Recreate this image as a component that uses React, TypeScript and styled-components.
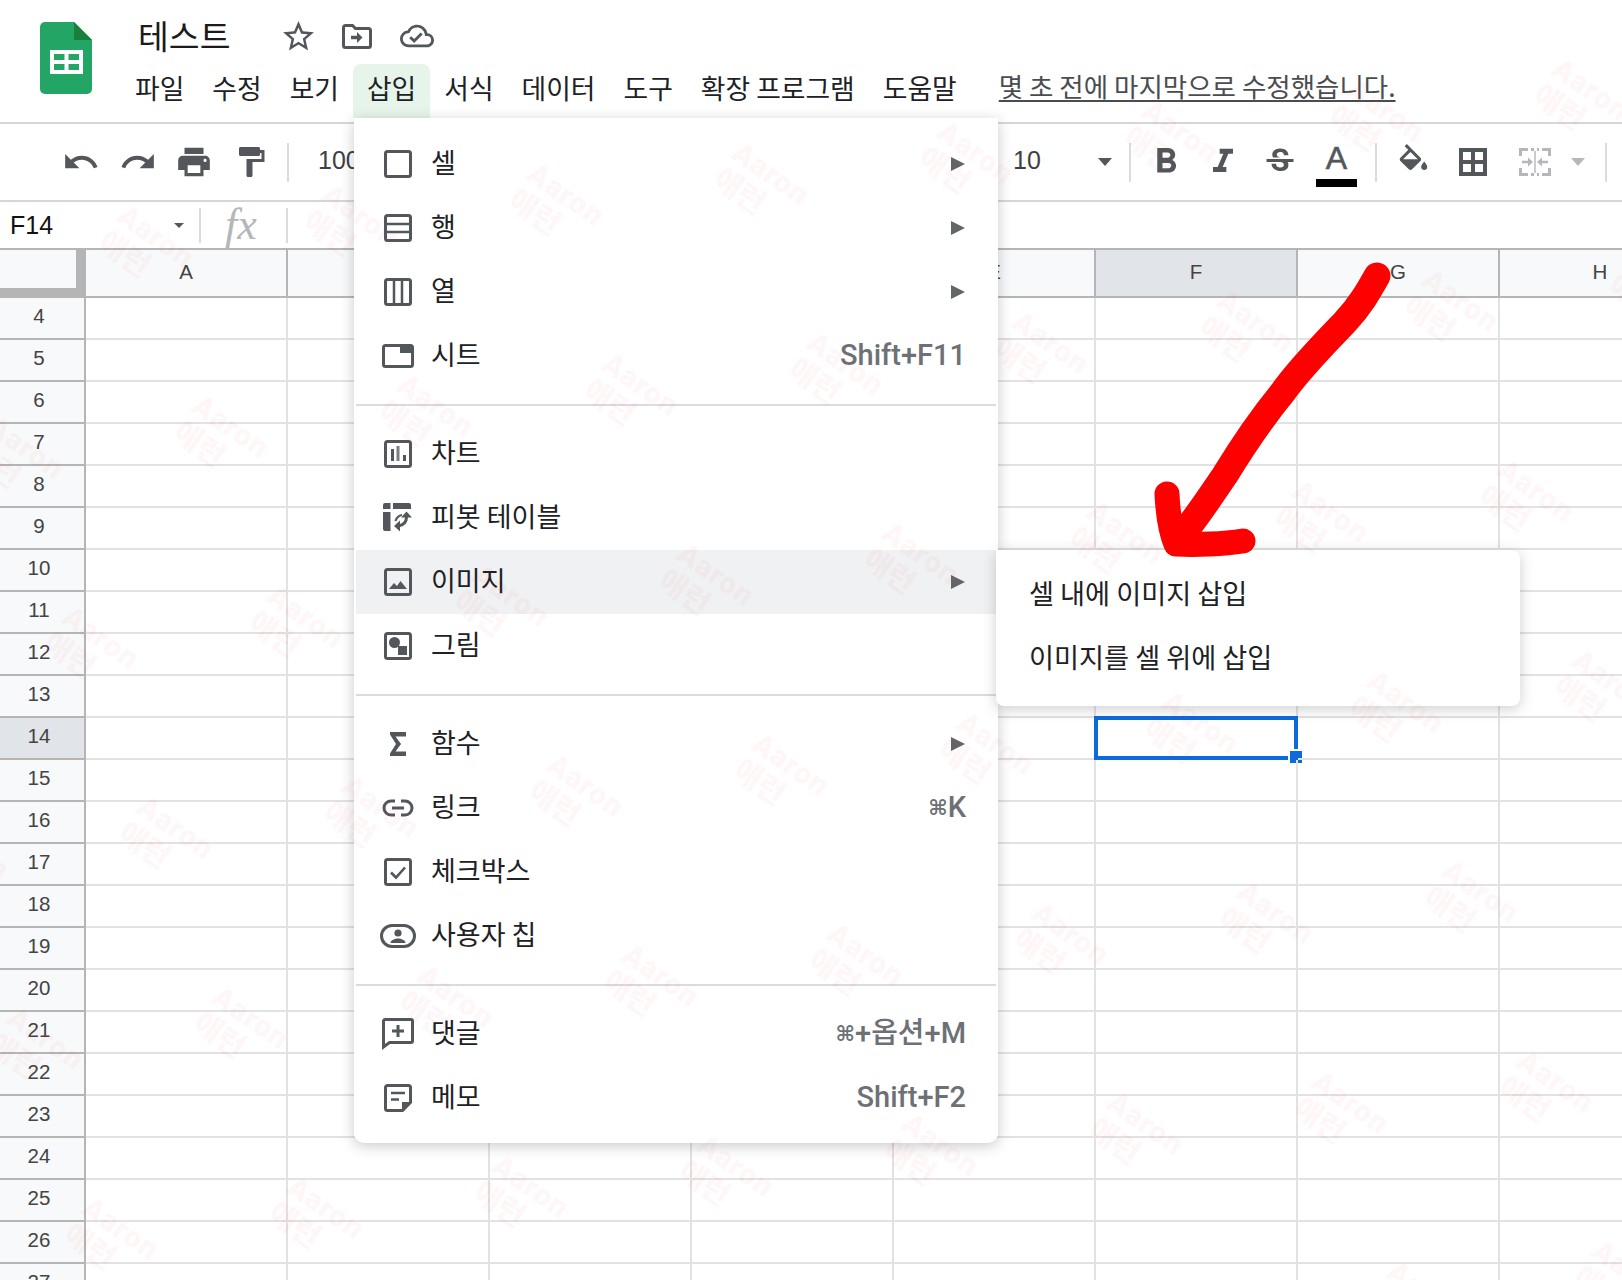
import React from 'react';
import styled, { createGlobalStyle } from 'styled-components';
import {
  MdUndo, MdRedo, MdPrint, MdFormatPaint, MdFormatBold, MdFormatItalic, MdStrikethroughS,
  MdStarBorder, MdOutlineCloudDone,
} from 'react-icons/md';

const KO = '"Noto Sans CJK KR", "Noto Sans", sans-serif';
const UI = '"Liberation Sans", Arial, sans-serif';
const ICON = '#53575c';

const Global = createGlobalStyle`
  html, body { margin: 0; padding: 0; background: #fff; }
  body { font-family: ${KO}; }
  * { box-sizing: border-box; }
`;

const Page = styled.div`
  position: relative; width: 1622px; height: 1280px; overflow: hidden; background: #fff;
  display: flex; flex-direction: column;
`;

/* ---------- header ---------- */
const Header = styled.header`
  display: flex; height: 124px; padding-left: 40px; border-bottom: 2px solid #d6d6da; flex: none;
`;
const LogoSvg = styled.svg`width: 52px; height: 72px; margin-top: 22px; flex: none;`;
const HeaderBody = styled.div`margin-left: 29px; display: flex; flex-direction: column;`;
const TitleRow = styled.div`display: flex; align-items: center; height: 40px; margin-top: 16px; padding-left: 17px;`;
const Title = styled.div`font-size: 33.5px; color: #1b1b1b; width: 138px; line-height: 38px; height: 40px; white-space: nowrap;`;
const TitleIcon = styled.span<{ $w: number }>`
  display: inline-flex; width: ${p => p.$w}px; align-items: center; justify-content: center; color: ${ICON};
`;
const MenuBar = styled.nav`display: flex; height: 54px; margin-top: 8px; align-items: stretch;`;
const MenuTab = styled.div<{ $active?: boolean }>`
  padding: 0 14px; font-size: 26.8px; line-height: 48px; color: #202124; white-space: nowrap;
  border-radius: 8px 8px 0 0; background: ${p => (p.$active ? '#e6f4ea' : 'transparent')};
`;
const LastEdit = styled.a`
  margin-left: 28px; font-size: 26.5px; line-height: 44px; color: #4a4d50; text-decoration: underline;
  text-underline-offset: 3px; white-space: nowrap;
`;

/* ---------- toolbar ---------- */
const Toolbar = styled.div`
  display: flex; align-items: center; height: 78px; padding-left: 53px; flex: none;
  border-bottom: 2px solid #d6d6da; color: ${ICON};
`;
const ToolBtn = styled.span<{ $w: number; $muted?: boolean; $col?: boolean }>`
  display: inline-flex; width: ${p => p.$w}px; flex: none; align-items: center; justify-content: center;
  flex-direction: ${p => (p.$col ? 'column' : 'row')};
  color: ${p => (p.$muted ? '#b5b7ba' : ICON)};
`;
const ToolSep = styled.span<{ $l: number; $r?: number }>`
  width: 2px; height: 39px; background: #dadbdd; flex: none;
  margin-left: ${p => p.$l}px; margin-right: ${p => p.$r ?? 0}px;
`;
const ToolText = styled.span<{ $w: number; $l?: number }>`
  width: ${p => p.$w}px; margin-left: ${p => p.$l ?? 0}px; flex: none; padding-bottom: 4px;
  font: 25px/1 ${UI}; color: #3c4043;
`;
const Caret = styled.span<{ $muted?: boolean; $l?: number; $size?: number }>`
  flex: none; width: 0; height: 0; margin-left: ${p => p.$l ?? 0}px;
  border-left: ${p => p.$size ?? 7.5}px solid transparent; border-right: ${p => p.$size ?? 7.5}px solid transparent;
  border-top: ${p => p.$size ?? 8}px solid ${p => (p.$muted ? '#b5b7ba' : ICON)};
`;
const ColorLetter = styled.span`font: 32px/20px ${UI}; color: ${ICON}; height: 30px; margin-top: 11px; -webkit-text-stroke: .6px ${ICON};`;
const ColorBar = styled.span`display: block; width: 41px; height: 8px; background: #000; margin-top: 1px;`;
const FillSvg = styled.svg`margin-top: -10px;`;
const MergeSvg = styled.svg`margin-left: 3px;`;

/* ---------- formula bar ---------- */
const FormulaBar = styled.div`
  display: flex; align-items: center; height: 48px; flex: none; border-bottom: 2px solid #b5b5b5;
`;
const NameBox = styled.div`display: flex; align-items: center; width: 199px; padding-left: 10px; flex: none;`;
const CellName = styled.span`font: 25px/1 ${UI}; color: #111; width: 164px;`;
const FormulaSep = styled.span`width: 2px; height: 35px; background: #dadbdd; flex: none;`;
const FxBox = styled.span`
  width: 85px; flex: none; text-align: center; font: italic 44px/40px "Liberation Serif", serif; color: #b4b6b8;
  padding-right: 5px;
`;

/* ---------- grid ---------- */
const Grid = styled.div`display: flex; flex-direction: column; flex: 1; overflow: hidden;`;
const HeadRow = styled.div`display: flex; height: 48px; flex: none; border-bottom: 2px solid #b5b5b5;`;
const Corner = styled.div`
  width: 86px; height: 48px; flex: none; background: #f8f9fa; border-right: 10px solid #b5b5b5; border-bottom: 10px solid #b5b5b5;
`;
const ColHead = styled.div<{ $active?: boolean }>`
  width: 202px; height: 46px; flex: none; display: flex; align-items: center; justify-content: center;
  font: 20.5px/1 ${UI}; color: #444; border-right: 2px solid #b5b5b5; padding-bottom: 2px;
  background: ${p => (p.$active ? '#e1e4e8' : '#f8f9fa')};
`;
const Row = styled.div`display: flex; height: 42px; flex: none;`;
const RowHead = styled.div<{ $active?: boolean }>`
  width: 86px; height: 42px; flex: none; display: flex; align-items: center; justify-content: center;
  font: 20.5px/1 ${UI}; color: #444; padding-right: 6px; padding-bottom: 3px;
  background: ${p => (p.$active ? '#e1e4e8' : '#f8f9fa')};
  border-right: 2px solid #b5b5b5; border-bottom: 2px solid #b5b5b5;
`;
const Cell = styled.div`
  position: relative; width: 202px; height: 42px; flex: none;
  border-right: 2px solid #e2e2e2; border-bottom: 2px solid #e2e2e2;
`;
const Selection = styled.div`
  position: absolute; top: -2px; left: -2px; right: -2px; bottom: -2px; border: 4px solid #0b6bdc;
`;
const Handle = styled.div`
  position: absolute; right: -10px; bottom: -9px; width: 16px; height: 16px; background: #0b6bdc; border: 2px solid #fff;
`;

/* ---------- menus ---------- */
const Menu = styled.div`
  position: absolute; left: 354px; top: 118px; width: 644px; padding: 14px 2px 13px; background: #fff;
  border-radius: 0 0 10px 10px; box-shadow: 0 3px 14px rgba(60,64,67,.28);
`;
const Divider = styled.div`height: 2px; margin: 16px 0; background: #dadadf;`;
const MenuItem = styled.div<{ $hover?: boolean }>`
  display: flex; align-items: center; height: 64px; padding: 0 30px 0 24px;
  background: ${p => (p.$hover ? '#f0f1f3' : 'transparent')};
`;
const ItemIcon = styled.span`width: 36px; height: 36px; flex: none; display: flex; align-items: center; justify-content: center; color: ${ICON};`;
const ItemLabel = styled.span`margin-left: 15px; flex: 1; font-size: 27px; line-height: 1; color: #202124; padding-bottom: 5px;`;
const Shortcut = styled.span`font: 500 29px/1 Roboto, ${KO}; color: #6d7175; white-space: nowrap; padding-bottom: 2px;`;
const KeySym = styled.span`font: 700 21px/1 "DejaVu Sans", sans-serif; vertical-align: 2px;`;
const SubArrow = styled.span`
  width: 0; height: 0; margin-right: 1px; border-left: 14px solid #636669; border-top: 7.5px solid transparent; border-bottom: 7.5px solid transparent;
`;
const SubMenu = styled.div`
  position: absolute; left: 996px; top: 550px; width: 524px; padding: 12px 0 16px; background: #fff;
  border-radius: 0 8px 8px 8px; box-shadow: 0 3px 14px rgba(60,64,67,.25);
`;
const SubItem = styled.div`
  height: 64px; padding: 0 33px 4px; display: flex; align-items: center; font-size: 27.2px; color: #202124;
`;

/* ---------- overlays ---------- */
const ArrowSvg = styled.svg`position: absolute; left: 1140px; top: 250px; width: 270px; height: 330px;`;
const WatermarkLayer = styled.div`position: absolute; inset: 0; overflow: hidden; pointer-events: none;`;
const Mark = styled.div`
  position: absolute; width: 100px; transform: translate(-50%, -50%) rotate(35deg);
  color: rgba(255, 0, 0, .05); font-size: 30px; line-height: 30px; white-space: nowrap;
`;
const MarkLatin = styled.div`font-family: Roboto, sans-serif; font-weight: 900; letter-spacing: 1px;`;
const MarkKo = styled.div`font-family: ${KO}; font-weight: 900; letter-spacing: -.5px;`;

/* ---------- drawings ---------- */
const Logo = () => (
  <LogoSvg viewBox="0 0 52 72">
    <path d="M5 0h29l18 18v49a5 5 0 0 1-5 5H5a5 5 0 0 1-5-5V5a5 5 0 0 1 5-5z" fill="#23a566" />
    <path d="M34 0l18 18H34z" fill="#188038" />
    <path d="M10 28h33v24H10z" fill="#fff" />
    <path d="M14 32h10.5v6H14zM28.5 32H39v6H28.5zM14 42h10.5v6H14zM28.5 42H39v6H28.5z" fill="#23a566" />
  </LogoSvg>
);

const FolderMove = () => (
  <svg width="30" height="25" viewBox="0 0 30 25">
    <path d="M1.5 3.5a2 2 0 0 1 2-2h7l3 3h13a2 2 0 0 1 2 2v15a2 2 0 0 1-2 2h-23a2 2 0 0 1-2-2z" fill="none" stroke={ICON} strokeWidth="3" />
    <path d="M15 8l5.5 5.5L15 19v-3.8H9v-3.4h6z" fill={ICON} />
  </svg>
);

type SvgProps = { w?: number; h?: number; children: React.ReactNode };
const Glyph = ({ w = 28, h = 28, children }: SvgProps) => (
  <svg width={w} height={h} viewBox={`0 0 ${w} ${h}`} fill="none" stroke={ICON} strokeWidth="3">{children}</svg>
);
const Box = () => <rect x="1.5" y="1.5" width="25" height="25" rx="2" />;

const icons: Record<string, React.ReactNode> = {
  cell: <Glyph><Box /></Glyph>,
  row: <Glyph><Box /><path d="M2 10h24M2 18h24" strokeWidth="2.5" /></Glyph>,
  col: <Glyph><Box /><path d="M10 2v24M18 2v24" strokeWidth="2.5" /></Glyph>,
  sheet: <Glyph w={32} h={24}><rect x="1.5" y="1.5" width="29" height="21" rx="2" /><path d="M18 1.5h12.5V9H18z" fill={ICON} stroke="none" /></Glyph>,
  chart: <Glyph><Box /><path d="M7 9h3v12H7zM19 15h3v6h-3z" fill={ICON} stroke="none" /><path d="M12.5 6h3v15h-3z" fill="#7a7d81" stroke="none" /></Glyph>,
  pivot: (
    <Glyph w={30} h={30}>
      <path d="M2 0h5.5v6H0V2a2 2 0 0 1 2-2zM10 0h16a2 2 0 0 1 2 2v4H10zM0 9h7.5v19H2a2 2 0 0 1-2-2z" fill={ICON} stroke="none" />
      <path d="M23.5 14c0 5-3 8-8 9" strokeWidth="3" />
      <path d="M19 12c-3 .5-5.500 2.500-6.500 6" strokeWidth="2.200" />
      <path d="M23.5 8.500l5.500 6h-11zM11 23l6-5.500v11z" fill={ICON} stroke="none" />
    </Glyph>
  ),
  image: <Glyph><Box /><path d="M5 21l5-6 3 3 3.5-5 6.5 8z" fill={ICON} stroke="none" /></Glyph>,
  drawing: <Glyph><Box /><circle cx="10.5" cy="10.5" r="5.5" fill={ICON} stroke="none" /><path d="M14 14h9v9h-9z" fill={ICON} stroke="none" /></Glyph>,
  sigma: <Glyph><path d="M6 2h16v4.5H11.5L17 14l-5.5 7.5H22V26H6v-2.5L12 14 6 4.5z" fill={ICON} stroke="none" /></Glyph>,
  link: <Glyph w={32} h={18}><path d="M13 2H9a7 7 0 0 0 0 14h4M19 2h4a7 7 0 0 1 0 14h-4M10 9h12" /></Glyph>,
  check: <Glyph><Box /><path d="M7 14.5l5 5 9-10" strokeWidth="2.6" /></Glyph>,
  chip: (
    <Glyph w={36} h={24}>
      <rect x="1.5" y="1.5" width="33" height="21" rx="10.5" />
      <circle cx="18" cy="9" r="3.6" fill={ICON} stroke="none" />
      <path d="M10.5 19c0-3 4.5-4.5 7.5-4.5s7.5 1.500 7.500 4.500z" fill={ICON} stroke="none" />
    </Glyph>
  ),
  comment: <Glyph w={32} h={32}><path d="M3 1.500h26a1.500 1.500 0 0 1 1.500 1.500v20a1.500 1.500 0 0 1-1.500 1.500H7.500L1.500 29V3A1.500 1.500 0 0 1 3 1.500z" /><path d="M16 7v12M10 13h12" /></Glyph>,
  note: (
    <Glyph>
      <path d="M3.500 1.500h21a2 2 0 0 1 2 2v15l-8 8h-15a2 2 0 0 1-2-2v-21a2 2 0 0 1 2-2z" />
      <path d="M7 9h14M7 15.500h8" strokeWidth="2.6" />
      <path d="M18 18h9l-9 9z" fill={ICON} stroke="none" />
    </Glyph>
  ),
};

type Item = { icon: string; label: string; sub?: boolean; hover?: boolean; key?: React.ReactNode };
const sections: Item[][] = [
  [
    { icon: 'cell', label: '셀', sub: true },
    { icon: 'row', label: '행', sub: true },
    { icon: 'col', label: '열', sub: true },
    { icon: 'sheet', label: '시트', key: 'Shift+F11' },
  ],
  [
    { icon: 'chart', label: '차트' },
    { icon: 'pivot', label: '피봇 테이블' },
    { icon: 'image', label: '이미지', sub: true, hover: true },
    { icon: 'drawing', label: '그림' },
  ],
  [
    { icon: 'sigma', label: '함수', sub: true },
    { icon: 'link', label: '링크', key: <><KeySym>⌘</KeySym>K</> },
    { icon: 'check', label: '체크박스' },
    { icon: 'chip', label: '사용자 칩' },
  ],
  [
    { icon: 'comment', label: '댓글', key: <><KeySym>⌘</KeySym>+옵션+M</> },
    { icon: 'note', label: '메모', key: 'Shift+F2' },
  ],
];

const tabs = ['파일', '수정', '보기', '삽입', '서식', '데이터', '도구', '확장 프로그램', '도움말'];
const cols = ['A', 'B', 'C', 'D', 'E', 'F', 'G', 'H'];
const rows = Array.from({ length: 24 }, (_, i) => i + 4);

const marks: { x: number; y: number }[] = [];
for (let i = -12; i <= 12; i++) {
  for (let j = -4; j <= 8; j++) {
    const x = 1273 + 205 * i + 75 * j;
    const y = 929 - 21 * i + 190 * j;
    if (x > -80 && x < 1700 && y > -60 && y < 1340) marks.push({ x, y });
  }
}

export default function App() {
  return (
    <Page>
      <Global />
      <Header>
        <Logo />
        <HeaderBody>
          <TitleRow>
            <Title>테스트</Title>
            <TitleIcon $w={44}><MdStarBorder size={37} /></TitleIcon>
            <TitleIcon $w={74}><FolderMove /></TitleIcon>
            <TitleIcon $w={46}><MdOutlineCloudDone size={34} /></TitleIcon>
          </TitleRow>
          <MenuBar>
            {tabs.map(t => <MenuTab key={t} $active={t === '삽입'}>{t}</MenuTab>)}
            <LastEdit>몇 초 전에 마지막으로 수정했습니다.</LastEdit>
          </MenuBar>
        </HeaderBody>
      </Header>

      <Toolbar>
        <ToolBtn $w={56.5}><MdUndo size={38} /></ToolBtn>
        <ToolBtn $w={56.5}><MdRedo size={38} /></ToolBtn>
        <ToolBtn $w={56.5}><MdPrint size={38} /></ToolBtn>
        <ToolBtn $w={56.5}><MdFormatPaint size={36} /></ToolBtn>
        <ToolSep $l={8} />
        <ToolText $l={29} $w={695}>100%</ToolText>
        <ToolText $w={85}>10</ToolText>
        <Caret />
        <ToolSep $l={17} $r={6} />
        <ToolBtn $w={57}><MdFormatBold size={42} /></ToolBtn>
        <ToolBtn $w={57}><MdFormatItalic size={40} /></ToolBtn>
        <ToolBtn $w={57}><MdStrikethroughS size={36} /></ToolBtn>
        <ToolBtn $w={57} $col><ColorLetter>A</ColorLetter><ColorBar /></ToolBtn>
        <ToolSep $l={10} $r={6} />
        <ToolBtn $w={60}>
          <FillSvg width="37" height="26" viewBox="0 0 24 17" fill={ICON}>
            <path d="M16.56 8.94L7.62 0 6.21 1.41l2.38 2.38-5.15 5.15c-.59.59-.59 1.54 0 2.12l5.5 5.5c.29.29.68.44 1.06.44s.77-.15 1.06-.44l5.5-5.5c.59-.58.59-1.53 0-2.120zM5.21 10L10 5.21 14.79 10H5.21zM19 11.5s-2 2.17-2 3.5c0 1.1.9 2 2 2s2-.9 2-2c0-1.33-2-3.5-2-3.500z" />
          </FillSvg>
        </ToolBtn>
        <ToolBtn $w={60}>
          <svg width="28" height="28" viewBox="0 0 28 28" fill="none" stroke={ICON} strokeWidth="4">
            <path d="M2 2h24v24H2zM14 2v24M2 14h24" />
          </svg>
        </ToolBtn>
        <ToolBtn $w={60} $muted>
          <MergeSvg width="32" height="28" viewBox="0 0 32 28" fill="none" stroke="#b5b7ba" strokeWidth="3">
            <path d="M1.500 8V1.500H9M23 1.500h7.500V8M30.500 20v6.500H23M9 26.500H1.500V20M12 1.500h3M18 1.500h2M12 26.500h3M18 26.500h2" />
            <path d="M3 14h8M29 14h-8" strokeWidth="2.4" />
            <path d="M9 9.500l5 4.500-5 4.500zM23 9.500l-5 4.500 5 4.500z" fill="#b5b7ba" stroke="none" />
            <path d="M16 3v22" strokeWidth="1.400" />
          </MergeSvg>
        </ToolBtn>
        <Caret $muted $l={8} />
        <ToolSep $l={20} />
      </Toolbar>

      <FormulaBar>
        <NameBox>
          <CellName>F14</CellName>
          <Caret $size={5.5} />
        </NameBox>
        <FormulaSep />
        <FxBox>fx</FxBox>
        <FormulaSep />
      </FormulaBar>

      <Grid>
        <HeadRow>
          <Corner />
          {cols.map(c => <ColHead key={c} $active={c === 'F'}>{c}</ColHead>)}
        </HeadRow>
        {rows.map(r => (
          <Row key={r}>
            <RowHead $active={r === 14}>{r}</RowHead>
            {cols.map(c => (
              <Cell key={c}>
                {r === 14 && c === 'F' && <Selection><Handle /></Selection>}
              </Cell>
            ))}
          </Row>
        ))}
      </Grid>

      <Menu>
        {sections.map((items, s) => (
          <React.Fragment key={s}>
            {s > 0 && <Divider />}
            {items.map(it => (
              <MenuItem key={it.label} $hover={it.hover}>
                <ItemIcon>{icons[it.icon]}</ItemIcon>
                <ItemLabel>{it.label}</ItemLabel>
                {it.key && <Shortcut>{it.key}</Shortcut>}
                {it.sub && <SubArrow />}
              </MenuItem>
            ))}
          </React.Fragment>
        ))}
      </Menu>

      <SubMenu>
        <SubItem>셀 내에 이미지 삽입</SubItem>
        <SubItem>이미지를 셀 위에 삽입</SubItem>
      </SubMenu>

      <ArrowSvg viewBox="1140 250 270 330" fill="none" stroke="#ff0000" strokeLinecap="round" strokeLinejoin="round">
        <path strokeWidth="27" d="M1377 276C1368 292 1360 306 1345 322C1325 343 1300 368 1283 392C1265 414 1245 442 1225 475C1210 497 1195 520 1178 540" />
        <path strokeWidth="25" d="M1167 494C1168 515 1170 530 1176 544C1195 545 1224 544 1243 541" />
      </ArrowSvg>

      <WatermarkLayer>
        {marks.map(m => (
          <Mark key={`${m.x}-${m.y}`} style={{ left: m.x, top: m.y }}>
            <MarkLatin>Aaron</MarkLatin>
            <MarkKo>애런</MarkKo>
          </Mark>
        ))}
      </WatermarkLayer>
    </Page>
  );
}
